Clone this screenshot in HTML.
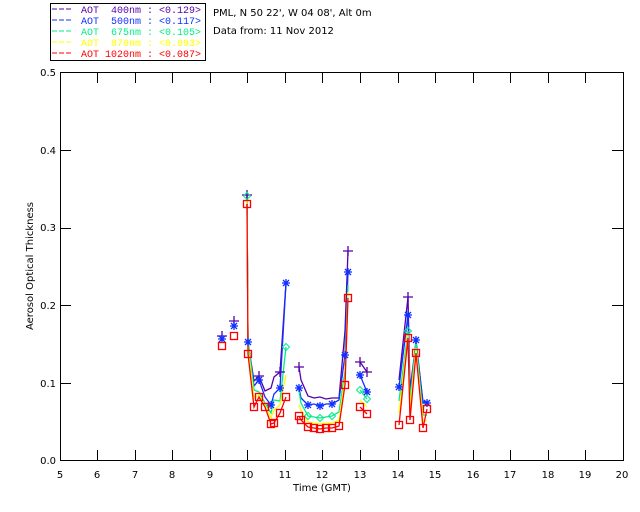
<!DOCTYPE html>
<html><head><meta charset="utf-8"><style>
body{margin:0;background:#fff;width:640px;height:512px;overflow:hidden}
svg{display:block}
text{font-family:"DejaVu Sans","Liberation Sans",sans-serif;font-size:10px}
.lg{font-family:"Liberation Mono",monospace;font-size:10px;white-space:pre}
</style></head><body>
<svg width="640" height="512" viewBox="0 0 640 512">
<defs>
<g id="sq"><rect x="-3.5" y="-3.5" width="7" height="7" fill="none" stroke="#f00" stroke-width="1.3"/></g>
<g id="pl"><path d="M-5 0H5M0 -5V5" stroke="#5500aa" stroke-width="1.3"/></g>
<g id="st"><path d="M-4 0H4M0 -4V4M-3 -3L3 3M-3 3L3 -3" stroke="#1030ff" stroke-width="1.3"/></g>
<g id="di"><path d="M0 -3.5L3.5 0L0 3.5L-3.5 0Z" fill="none" stroke="#00ee88" stroke-width="1"/></g>
</defs>
<!-- legend -->
<rect x="50.5" y="3.5" width="155" height="57" fill="none" stroke="#000"/>
<g stroke-width="1" stroke-dasharray="5,2">
<line x1="52" y1="9" x2="72" y2="9" stroke="#5500aa"/>
<line x1="52" y1="20" x2="72" y2="20" stroke="#1030ff"/>
<line x1="52" y1="31" x2="72" y2="31" stroke="#00ee88"/>
<line x1="52" y1="42" x2="72" y2="42" stroke="#ffff00"/>
<line x1="52" y1="53" x2="72" y2="53" stroke="#ff0000"/>
</g>
<text class="lg" x="81" y="13" fill="#5500aa">AOT  400nm : &lt;0.129&gt;</text>
<text class="lg" x="81" y="24" fill="#1030ff">AOT  500nm : &lt;0.117&gt;</text>
<text class="lg" x="81" y="35" fill="#00ee88">AOT  675nm : &lt;0.105&gt;</text>
<text class="lg" x="81" y="46" fill="#ffff00">AOT  870nm : &lt;0.093&gt;</text>
<text class="lg" x="81" y="57" fill="#ff0000">AOT 1020nm : &lt;0.087&gt;</text>
<text x="213" y="16" fill="#000">PML, N 50 22', W 04 08', Alt 0m</text>
<text x="213" y="34" fill="#000">Data from: 11 Nov 2012</text>
<!-- axes -->
<rect x="60.5" y="72.5" width="563" height="388" fill="none" stroke="#000"/>
<g stroke="#000">
<path d="M97.5 461V450M135.5 461V450M172.5 461V450M210.5 461V450M247.5 461V450M285.5 461V450M322.5 461V450M360.5 461V450M398.5 461V450M435.5 461V450M473.5 461V450M510.5 461V450M548.5 461V450M585.5 461V450"/>
<path d="M97.5 72V83M135.5 72V83M172.5 72V83M210.5 72V83M247.5 72V83M285.5 72V83M322.5 72V83M360.5 72V83M398.5 72V83M435.5 72V83M473.5 72V83M510.5 72V83M548.5 72V83M585.5 72V83"/>
<path d="M60 383.5H71M60 305.5H71M60 228.5H71M60 150.5H71M612 383.5H623M612 305.5H623M612 228.5H623M612 150.5H623"/>
</g>
<g text-anchor="middle" fill="#000">
<text x="60" y="478">5</text><text x="97" y="478">6</text><text x="135" y="478">7</text><text x="172" y="478">8</text><text x="210" y="478">9</text><text x="247" y="478">10</text><text x="285" y="478">11</text><text x="322" y="478">12</text><text x="360" y="478">13</text><text x="398" y="478">14</text><text x="435" y="478">15</text><text x="473" y="478">16</text><text x="510" y="478">17</text><text x="548" y="478">18</text><text x="585" y="478">19</text><text x="622" y="478">20</text>
<text x="322" y="491">Time (GMT)</text>
</g>
<g text-anchor="end" fill="#000">
<text x="56" y="464">0.0</text><text x="56" y="387">0.1</text><text x="56" y="309">0.2</text><text x="56" y="231">0.3</text><text x="56" y="154">0.4</text><text x="56" y="76">0.5</text>
</g>
<text transform="translate(33,266) rotate(-90)" text-anchor="middle" fill="#000">Aerosol Optical Thickness</text>
<!-- data -->
<g fill="none" stroke-width="1.3">
<g stroke="#5500aa">
<polyline points="247,195 248,343 254,381 259,376 265,391 271,388 274,377 280,372 286,283"/>
<polyline points="299,367 301,380 308,396 314,398 320,397 326,399 332,398 339,398 345,331 348,251"/>
<polyline points="360,362 367,372"/>
<polyline points="399,380 408,297 410,390 416,343 423,402 427,402"/>
</g>
<g stroke="#1030ff">
<polyline points="247,195 248,342 254,386 259,380 265,397 271,405 274,394 280,388 286,283"/>
<polyline points="299,388 301,398 308,405 314,404 320,406 326,404 332,404 339,400 345,355 348,272"/>
<polyline points="360,375 367,392"/>
<polyline points="399,387 408,315 410,400 416,340 423,403 427,403"/>
</g>
<g stroke="#00ee88">
<polyline points="247,196 248,340 254,390 259,392 265,403 271,413 274,400 280,401 286,347"/>
<polyline points="299,391 301,403 308,416 314,417 320,418 326,417 332,416 339,412 345,371 348,285"/>
<polyline points="360,390 367,399"/>
<polyline points="399,401 408,331 410,401 416,342 423,415 427,415"/>
</g>
<g stroke="#ffff00">
<polyline points="247,200 248,348 254,398 259,395 265,405 271,418 274,410 280,405 286,375"/>
<polyline points="299,405 301,410 308,422 314,423 320,424 326,423 332,423 339,420 345,378 348,292"/>
<polyline points="360,400 367,407"/>
<polyline points="399,413 408,335 410,410 416,348 423,421 427,421"/>
</g>
<g stroke="#ff0000">
<polyline points="247,204 248,354 254,407 259,397 265,407 271,424 274,423 280,413 286,397"/>
<polyline points="299,416 301,420 308,427 314,428 320,429 326,428 332,428 339,426 345,385 348,298"/>
<polyline points="360,407 367,414"/>
<polyline points="399,425 408,338 410,420 416,353 423,428 427,409"/>
</g>
</g>
<g>
<use href="#pl" x="222" y="336"/><use href="#pl" x="234" y="321"/>
<use href="#pl" x="247" y="195"/><use href="#pl" x="259" y="376"/><use href="#pl" x="280" y="372"/><use href="#pl" x="299" y="367"/><use href="#pl" x="348" y="251"/><use href="#pl" x="360" y="362"/><use href="#pl" x="367" y="372"/><use href="#pl" x="408" y="297"/>
<use href="#st" x="222" y="339"/><use href="#st" x="234" y="326"/><use href="#st" x="248" y="342"/><use href="#st" x="259" y="380"/><use href="#st" x="271" y="405"/><use href="#st" x="280" y="388"/><use href="#st" x="286" y="283"/><use href="#st" x="299" y="388"/><use href="#st" x="308" y="405"/><use href="#st" x="320" y="406"/><use href="#st" x="332" y="404"/><use href="#st" x="345" y="355"/><use href="#st" x="348" y="272"/><use href="#st" x="360" y="375"/><use href="#st" x="367" y="392"/><use href="#st" x="399" y="387"/><use href="#st" x="408" y="315"/><use href="#st" x="416" y="340"/><use href="#st" x="427" y="403"/>
<use href="#di" x="247" y="196"/><use href="#di" x="286" y="347"/><use href="#di" x="308" y="416"/><use href="#di" x="320" y="418"/><use href="#di" x="332" y="416"/><use href="#di" x="360" y="390"/><use href="#di" x="367" y="399"/><use href="#di" x="408" y="331"/>
<use href="#sq" x="222" y="346"/><use href="#sq" x="234" y="336"/><use href="#sq" x="247" y="204"/><use href="#sq" x="248" y="354"/><use href="#sq" x="254" y="407"/><use href="#sq" x="259" y="397"/><use href="#sq" x="265" y="407"/><use href="#sq" x="271" y="424"/><use href="#sq" x="274" y="423"/><use href="#sq" x="280" y="413"/><use href="#sq" x="286" y="397"/><use href="#sq" x="299" y="416"/><use href="#sq" x="301" y="420"/><use href="#sq" x="308" y="427"/><use href="#sq" x="314" y="428"/><use href="#sq" x="320" y="429"/><use href="#sq" x="326" y="428"/><use href="#sq" x="332" y="428"/><use href="#sq" x="339" y="426"/><use href="#sq" x="345" y="385"/><use href="#sq" x="348" y="298"/><use href="#sq" x="360" y="407"/><use href="#sq" x="367" y="414"/><use href="#sq" x="399" y="425"/><use href="#sq" x="408" y="338"/><use href="#sq" x="410" y="420"/><use href="#sq" x="416" y="353"/><use href="#sq" x="423" y="428"/><use href="#sq" x="427" y="409"/>
</g>
</svg>
</body></html>
